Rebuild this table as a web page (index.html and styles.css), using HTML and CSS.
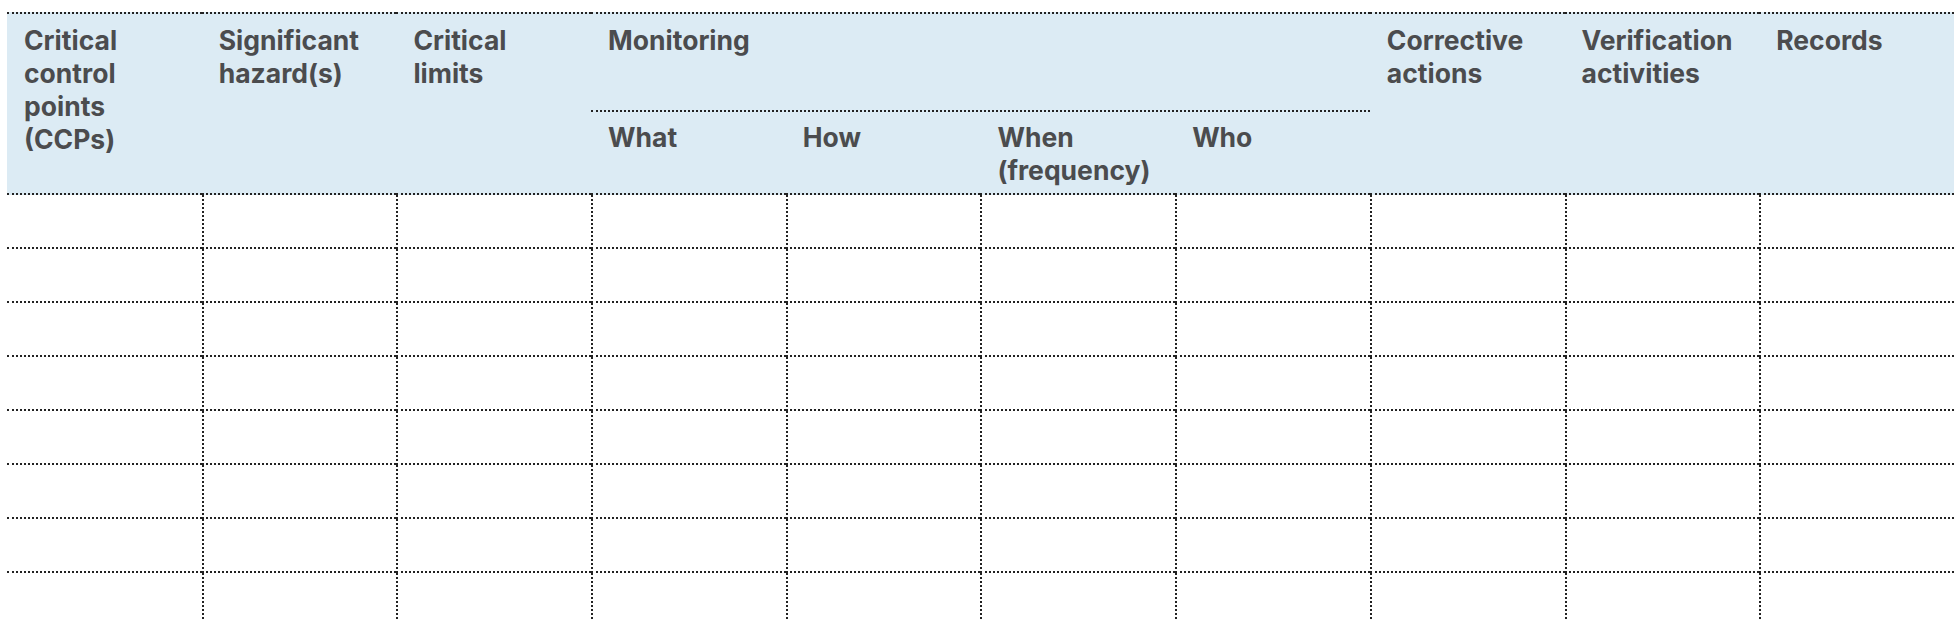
FILE: index.html
```html
<!DOCTYPE html>
<html lang="en">
<head>
<meta charset="utf-8">
<title>HACCP plan</title>
<link rel="stylesheet" href="styles.css">
</head>
<body>
<table class="plan">
  <colgroup>
    <col><col><col><col><col><col><col><col><col><col>
  </colgroup>
  <thead>
    <tr class="head-top">
      <th rowspan="2">Critical control points (CCPs)</th>
      <th rowspan="2">Significant hazard(s)</th>
      <th rowspan="2">Critical limits</th>
      <th colspan="4" class="group">Monitoring</th>
      <th rowspan="2">Corrective actions</th>
      <th rowspan="2">Verification activities</th>
      <th rowspan="2">Records</th>
    </tr>
    <tr class="head-sub">
      <th>What</th>
      <th>How</th>
      <th>When (frequency)</th>
      <th>Who</th>
    </tr>
  </thead>
  <tbody>
    <tr><td></td><td></td><td></td><td></td><td></td><td></td><td></td><td></td><td></td><td></td></tr>
    <tr><td></td><td></td><td></td><td></td><td></td><td></td><td></td><td></td><td></td><td></td></tr>
    <tr><td></td><td></td><td></td><td></td><td></td><td></td><td></td><td></td><td></td><td></td></tr>
    <tr><td></td><td></td><td></td><td></td><td></td><td></td><td></td><td></td><td></td><td></td></tr>
    <tr><td></td><td></td><td></td><td></td><td></td><td></td><td></td><td></td><td></td><td></td></tr>
    <tr><td></td><td></td><td></td><td></td><td></td><td></td><td></td><td></td><td></td><td></td></tr>
    <tr><td></td><td></td><td></td><td></td><td></td><td></td><td></td><td></td><td></td><td></td></tr>
    <tr><td></td><td></td><td></td><td></td><td></td><td></td><td></td><td></td><td></td><td></td></tr>
  </tbody>
</table>
</body>
</html>
```
FILE: styles.css
```css
html, body {
  margin: 0;
  padding: 0;
  overflow: hidden;
  background: #ffffff;
}

body {
  padding: 12px 0 0 7px;
  font-family: "Inter", "Open Sans", sans-serif;
}

.plan {
  width: 1947px;
  table-layout: fixed;
  border-collapse: separate;
  border-spacing: 0;
}

.plan col {
  width: 10%;
}

.plan th {
  background: #dcebf4;
  color: #4b4c4e;
  font-weight: 700;
  font-size: 26.5px;
  line-height: 33px;
  text-align: left;
  vertical-align: top;
  padding: 10px 12px 0 17px;
  border-bottom: 2px dotted #222222;
  box-sizing: border-box;
}

.head-top th {
  border-top: 2px dotted #222222;
}

.head-top {
  height: 100px;
}

.head-sub {
  height: 83px;
}

.head-sub th {
  padding-top: 9px;
}

.plan tbody tr {
  height: 54px;
}

.plan td {
  padding: 0;
  border-bottom: 2px dotted #222222;
  box-sizing: border-box;
}

.plan td + td {
  border-left: 2px dotted #222222;
}
```
